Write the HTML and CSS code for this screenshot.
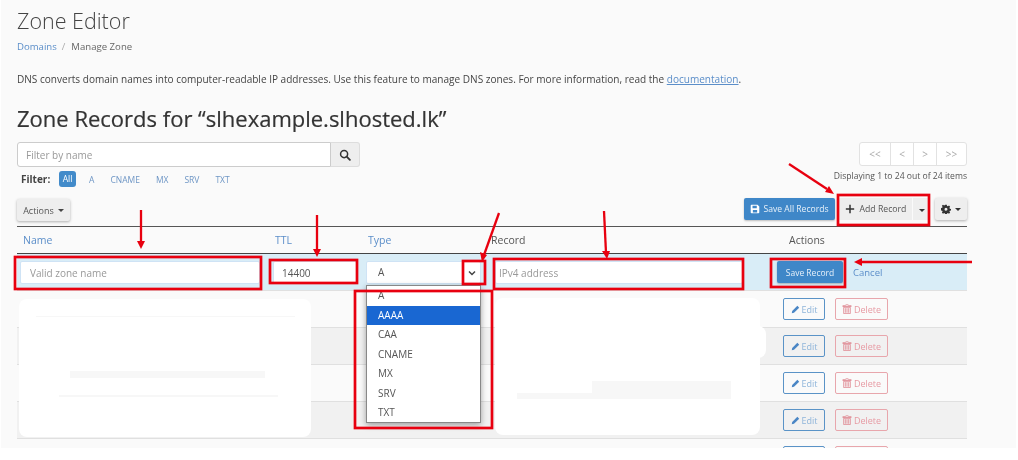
FILE: index.html
```html
<!DOCTYPE html>
<html lang="en">
<head>
<meta charset="utf-8">
<title>Zone Editor</title>
<link rel="stylesheet" href="styles.css">
</head>
<body>
<main class="page">
  <h1 class="title">Zone Editor</h1>
  <nav class="crumbs"><a class="link">Domains</a><span class="sep">/</span><span>Manage Zone</span></nav>
  <p class="intro">DNS converts domain names into computer-readable IP addresses. Use this feature to manage DNS zones. For more information, read the <a class="link under">documentation</a>.</p>
  <h2 class="heading">Zone Records for “slhexample.slhosted.lk”</h2>

  <section class="tools">
    <div class="tools-left">
      <div class="search">
        <div class="search-input">Filter by name</div>
        <div class="search-btn"><svg class="i12" viewBox="0 0 16 16"><circle cx="6.8" cy="6.8" r="4.7" fill="none" stroke="#333" stroke-width="2"/><path d="M10.3 10.3 14.5 14.5" stroke="#333" stroke-width="2.4" stroke-linecap="round"/></svg></div>
      </div>
      <div class="filter">
        <b class="filter-label">Filter:</b>
        <span class="pill">All</span>
        <span class="chip chip-a">A</span>
        <span class="chip">CNAME</span>
        <span class="chip">MX</span>
        <span class="chip">SRV</span>
        <span class="chip">TXT</span>
      </div>
      <button class="btn btn-default actions-btn">Actions<i class="caret"></i></button>
    </div>
    <div class="tools-right">
      <div class="pager"><span class="wide">&lt;&lt;</span><span>&lt;</span><span>&gt;</span><span class="wide">&gt;&gt;</span></div>
      <div class="count">Displaying 1 to 24 out of 24 items</div>
      <div class="buttons">
        <button class="btn btn-primary save-all"><svg class="i10" viewBox="0 0 14 14"><path fill="#fff" d="M1 2.2C1 1.5 1.5 1 2.2 1h8.3L13 3.5v8.3c0 .7-.5 1.2-1.2 1.2H2.2C1.5 13 1 12.500 1 11.800zM3.500 2.500v3.500h6V2.500zM4 8.500V12h6V8.500z"/></svg>Save All Records</button>
        <div class="split">
          <button class="btn-flat add"><svg class="i10" viewBox="0 0 12 12"><path d="M6 1v10M1 6h10" stroke="#333" stroke-width="1.800"/></svg>Add Record</button>
          <button class="btn-flat add-caret"><i class="caret dark"></i></button>
        </div>
        <button class="btn btn-default gear"><svg class="i10" viewBox="0 0 16 16"><path fill="#333" fill-rule="evenodd" d="M6.700 1h2.600l.4 2 1.300.6 1.800-1.100 1.800 1.800-1.100 1.800.6 1.300 1.900.4v2.400l-1.900.4-.6 1.300 1.100 1.800-1.800 1.800-1.800-1.100-1.300.6-.4 2H6.700l-.4-2-1.300-.6-1.800 1.100-1.800-1.800 1.100-1.800-.6-1.300-1.900-.4V6.400l1.900-.4.600-1.300-1.100-1.800 1.800-1.800 1.800 1.100 1.300-.6zM8 5.800a2.400 2.400 0 1 0 0 4.800 2.400 2.400 0 0 0 0-4.800z"/></svg><i class="caret dark"></i></button>
      </div>
    </div>
  </section>

  <section class="table">
    <div class="row head">
      <div class="cell link">Name</div>
      <div class="cell link">TTL</div>
      <div class="cell link">Type</div>
      <div class="cell">Record</div>
      <div class="cell">Actions</div>
    </div>
    <div class="row editing">
      <div class="cell"><div class="field field-name muted">Valid zone name</div></div>
      <div class="cell"><div class="field field-ttl">14400</div></div>
      <div class="cell"><div class="field field-type"><span>A</span><svg class="chev" viewBox="0 0 10 8"><path d="M2 2.500 5 5.500 8 2.500" fill="none" stroke="#444" stroke-width="1.500"/></svg></div></div>
      <div class="cell"><div class="field field-record muted">IPv4 address</div></div>
      <div class="cell action-cell"><button class="btn btn-primary save-record">Save Record</button><a class="link cancel">Cancel</a></div>
    </div>
    <div class="row rec"><div class="cell"></div><div class="cell"></div><div class="cell"></div><div class="cell"></div><div class="cell action-cell"><button class="btn-edit"><svg class="i9" viewBox="0 0 12 12"><path d="M1 11l.6-3L8.500 1.100 10.900 3.500 4 10.400z" fill="#4a86c5"/></svg>Edit</button><button class="btn-del"><svg class="i10" viewBox="0 0 12 12"><path d="M4.500 1h3l.5 1h3v1H1V2h3zM2 4h8v7.500H2zM4 5v5.500M6 5v5.500M8 5v5.500" fill="none" stroke="#e08a94" stroke-width="1"/></svg>Delete</button></div></div>
    <div class="row rec alt"><div class="cell"></div><div class="cell"></div><div class="cell"></div><div class="cell"></div><div class="cell action-cell"><button class="btn-edit"><svg class="i9" viewBox="0 0 12 12"><path d="M1 11l.6-3L8.500 1.100 10.900 3.500 4 10.400z" fill="#4a86c5"/></svg>Edit</button><button class="btn-del"><svg class="i10" viewBox="0 0 12 12"><path d="M4.500 1h3l.5 1h3v1H1V2h3zM2 4h8v7.500H2zM4 5v5.500M6 5v5.500M8 5v5.500" fill="none" stroke="#e08a94" stroke-width="1"/></svg>Delete</button></div></div>
    <div class="row rec"><div class="cell"></div><div class="cell"></div><div class="cell"></div><div class="cell"></div><div class="cell action-cell"><button class="btn-edit"><svg class="i9" viewBox="0 0 12 12"><path d="M1 11l.6-3L8.500 1.100 10.900 3.500 4 10.400z" fill="#4a86c5"/></svg>Edit</button><button class="btn-del"><svg class="i10" viewBox="0 0 12 12"><path d="M4.500 1h3l.5 1h3v1H1V2h3zM2 4h8v7.500H2zM4 5v5.500M6 5v5.500M8 5v5.500" fill="none" stroke="#e08a94" stroke-width="1"/></svg>Delete</button></div></div>
    <div class="row rec alt"><div class="cell"></div><div class="cell"></div><div class="cell"></div><div class="cell"></div><div class="cell action-cell"><button class="btn-edit"><svg class="i9" viewBox="0 0 12 12"><path d="M1 11l.6-3L8.500 1.100 10.900 3.500 4 10.400z" fill="#4a86c5"/></svg>Edit</button><button class="btn-del"><svg class="i10" viewBox="0 0 12 12"><path d="M4.500 1h3l.5 1h3v1H1V2h3zM2 4h8v7.500H2zM4 5v5.500M6 5v5.500M8 5v5.500" fill="none" stroke="#e08a94" stroke-width="1"/></svg>Delete</button></div></div>
    <div class="row rec"><div class="cell"></div><div class="cell"></div><div class="cell"></div><div class="cell"></div><div class="cell action-cell"><button class="btn-edit"></button><button class="btn-del"></button></div></div>
  </section>

  <div class="mask mask-left"><i class="smudge s1"></i><i class="smudge s2"></i><i class="smudge s3"></i></div>
  <div class="mask mask-right"><i class="smudge s4"></i><i class="smudge s5"></i></div>

  <ul class="dropdown">
    <li>A</li>
    <li class="selected">AAAA</li>
    <li>CAA</li>
    <li>CNAME</li>
    <li>MX</li>
    <li>SRV</li>
    <li>TXT</li>
  </ul>

  <svg class="marks" viewBox="0 0 1018 460">
    <g class="boxes">
      <rect x="15" y="257" width="246" height="32"/>
      <rect x="270" y="260" width="87" height="23"/>
      <rect x="355" y="291" width="137" height="137"/>
      <rect x="463" y="261" width="22" height="23"/>
      <rect x="494" y="259" width="249" height="30"/>
      <rect x="838" y="195" width="91" height="30"/>
      <rect x="771" y="259" width="74" height="28"/>
    </g>
    <g class="lines">
      <path d="M141 210V243"/>
      <path d="M317 215V251"/>
      <path d="M499 213 484 255"/>
      <path d="M604 211 606 253"/>
      <path d="M789 164 827 189"/>
      <path d="M972 262H861"/>
    </g>
    <g class="heads">
      <path d="M137 241h8l-4 8z"/>
      <path d="M313 249h8l-4 8z"/>
      <path d="M480 252l7 3-5 7z"/>
      <path d="M602 251h8l-3 8z"/>
      <path d="M825 192l4-6 5 8z"/>
      <path d="M862 258v8l-8-4z"/>
    </g>
  </svg>
</main>
</body>
</html>
```

FILE: styles.css
```css
* { box-sizing: border-box; }
html, body { margin: 0; padding: 0; }
body {
  background: #fff;
  height: 460px;
  overflow: hidden;
  font-family: "Open Sans", "Noto Sans", sans-serif;
  font-size: 10px;
  color: #555;
}
.page {
  position: relative;
  margin-left: 1px;
  width: 1015px;
  height: 448px;
  padding: 0 49px 0 16px;
  background: #fafafa;
  overflow: hidden;
  filter: blur(.35px);
}
.title {
  margin: 0;
  padding-top: 7px;
  font-size: 21.5px;
  line-height: 28px;
  font-weight: 300;
  color: #444;
}
.crumbs {
  margin-top: 5px;
  display: flex;
  font-size: 9.6px;
  line-height: 14px;
  color: #666;
}
.sep { margin: 0 6px 0 5px; color: #aaa; }
.link { color: #5b8ec9; }
.under { text-decoration: underline; }
.intro {
  margin: 18px 0 0;
  font-size: 10.05px;
  line-height: 14px;
  color: #444;
  white-space: nowrap;
}
.heading {
  margin: 17px 0 0;
  font-size: 22px;
  line-height: 30px;
  font-weight: 400;
  color: #333;
  white-space: nowrap;
  -webkit-text-stroke: .2px #333;
}
.tools {
  display: flex;
  justify-content: space-between;
  margin-top: 9px;
  height: 84px;
}
.tools-left, .tools-right { display: flex; flex-direction: column; }
.tools-right { align-items: flex-end; }
.search { display: flex; width: 343px; height: 25px; }
.search-input {
  flex: 1;
  background: #fff;
  border: 1px solid #ccc;
  border-radius: 3px 0 0 3px;
  padding: 0 8px;
  line-height: 25px;
  color: #999;
}
.search-btn {
  width: 29px;
  display: flex;
  align-items: center;
  justify-content: center;
  background: #eee;
  border: 1px solid #ddd;
  border-left: 0;
  border-radius: 0 3px 3px 0;
}
.i12 { width: 12px; height: 12px; }
.i10 { width: 10px; height: 10px; }
.i9 { width: 9px; height: 9px; }
.filter { display: flex; align-items: center; margin-top: 4px; height: 16px; padding-left: 4px; font-size: 8.5px; color: #6e96c5; }
.filter-label { width: 38px; font-size: 10px; color: #444; }
.pill { background: #428bca; color: #fff; border-radius: 3px; width: 17px; height: 16px; line-height: 16px; text-align: center; }
.chip { margin-left: 16px; }
.chip-a { margin-left: 13px; }
.btn {
  font-family: inherit;
  font-size: 9px;
  border-radius: 2px;
  padding: 0;
  height: 22px;
  display: inline-flex;
  align-items: center;
  justify-content: center;
  gap: 2px;
  border: 0;
}
.btn-default { background: #eee; color: #555; box-shadow: 0 1px 3px rgba(0,0,0,.3); }
.btn-primary { background: #3f87c8; color: #e6f0f9; box-shadow: 0 1px 2px rgba(0,0,0,.25); }
.actions-btn { margin-top: 12px; width: 53px; }
.caret {
  display: inline-block;
  margin-left: 2px;
  border-top: 3px solid #444;
  border-left: 3px solid transparent;
  border-right: 3px solid transparent;
}
.dark { border-top-color: #333; }
.pager {
  display: flex;
  height: 24px;
  background: #fff;
  border: 1px solid #e2e2e2;
  border-radius: 3px;
  color: #aaa;
  font-size: 10px;
  line-height: 22px;
  text-align: center;
}
.pager span { width: 23px; border-left: 1px solid #e2e2e2; }
.pager span.wide { width: 30px; }
.pager span:first-child { border-left: 0; }
.count { margin-top: 2px; height: 16px; font-size: 8.6px; line-height: 16px; color: #555; }
.buttons { display: flex; margin-top: 14px; }
.save-all { width: 91px; gap: 3px; font-size: 8.6px; }
.split { display: flex; margin-left: 4px; height: 22px; }
.btn-flat { font-family: inherit; border: 0; padding: 0; background: #eee; color: #555; font-size: 8.7px; }
.add { width: 73px; display: flex; align-items: center; gap: 5px; justify-content: center; }
.add-caret { width: 16px; margin-left: 1px; }
.gear { width: 32px; margin-left: 6px; }
.table { margin-top: 0; width: 950px; border-top: 1px solid #555; }
.row {
  display: grid;
  grid-template-columns: 252px 93px 123px 298px 184px;
  border-bottom: 1px solid #e0e0e0;
}
.cell { padding: 0 6px; }
.head { height: 27px; border-bottom: 1px solid #444; font-size: 10.5px; line-height: 27px; color: #555; }
.editing { height: 37px; background: #d9edf7; border-bottom-color: #e0e0e0; }
.editing .cell { padding: 7px 0 0; position: relative; }
.field {
  height: 23px;
  background: #fff;
  border: 1px solid #cfe3f5;
  border-radius: 2px;
  line-height: 23px;
  font-size: 10px;
  color: #555;
}
.muted { color: #999; }
.field-name { margin-left: 3px; width: 240px; padding-left: 9px; }
.field-ttl { margin-left: 4px; width: 84px; padding-left: 8px; }
.field-type { margin-left: 4px; width: 115px; padding: 0 3px 0 11px; display: flex; align-items: center; justify-content: space-between; }
.chev { width: 10px; height: 8px; }
.field-record { margin-left: 10px; width: 248px; padding-left: 3px; }
.action-cell { display: flex; align-items: center; padding: 0; }
.editing .action-cell { padding: 0; }
.save-record { margin-left: -6px; width: 66px; height: 22px; font-size: 8.5px; }
.cancel { margin-left: 10px; font-size: 9.5px; }
.rec { height: 37px; }
.alt { background: #f1f1f1; }
.btn-edit, .btn-del {
  font-family: inherit;
  font-size: 9px;
  height: 22px;
  padding: 0;
  background: transparent;
  border-radius: 2px;
  display: inline-flex;
  align-items: center;
  justify-content: center;
  gap: 2px;
}
.btn-edit { width: 42px; border: 1px solid #5a93c7; color: #8fb5da; }
.btn-del { width: 53px; margin-left: 10px; border: 1px solid #e8a6ac; color: #e79aa3; }
.mask { position: absolute; background: #fff; }
.mask-left { left: 18px; top: 299px; width: 292px; height: 138px; border-radius: 8px; }
.mask-right { left: 494px; top: 298px; width: 265px; height: 137px; border-radius: 8px; }
.mask-right::after { content: ""; position: absolute; left: 240px; top: 28px; width: 31px; height: 32px; background: #fff; border-radius: 8px; }
.smudge { position: absolute; background: #f7f7f7; display: block; }
.s1 { left: 17px; top: 17px; width: 259px; height: 1px; }
.s2 { left: 51px; top: 72px; width: 195px; height: 7px; }
.s3 { left: 40px; top: 96px; width: 219px; height: 2px; }
.s4 { left: 97px; top: 83px; width: 139px; height: 18px; }
.s5 { left: 22px; top: 95px; width: 75px; height: 6px; }
.dropdown {
  position: absolute;
  left: 365px;
  top: 285px;
  width: 115px;
  height: 138px;
  margin: 0;
  padding: 0;
  list-style: none;
  background: #fff;
  border: 1px solid #888;
  box-shadow: 0 2px 6px rgba(0,0,0,.35);
  font-size: 10px;
  color: #555;
}
.dropdown li { height: 19.500px; line-height: 19px; padding-left: 11px; }
.dropdown li.selected { background: #1967d2; color: #fff; }
.marks { position: absolute; left: -1px; top: 0; width: 1018px; height: 460px; pointer-events: none; }
.boxes rect { fill: none; stroke: #e8000f; stroke-width: 2.700; }
.lines path { fill: none; stroke: #e8000f; stroke-width: 2.300; }
.heads path { fill: #e8000f; }
```
